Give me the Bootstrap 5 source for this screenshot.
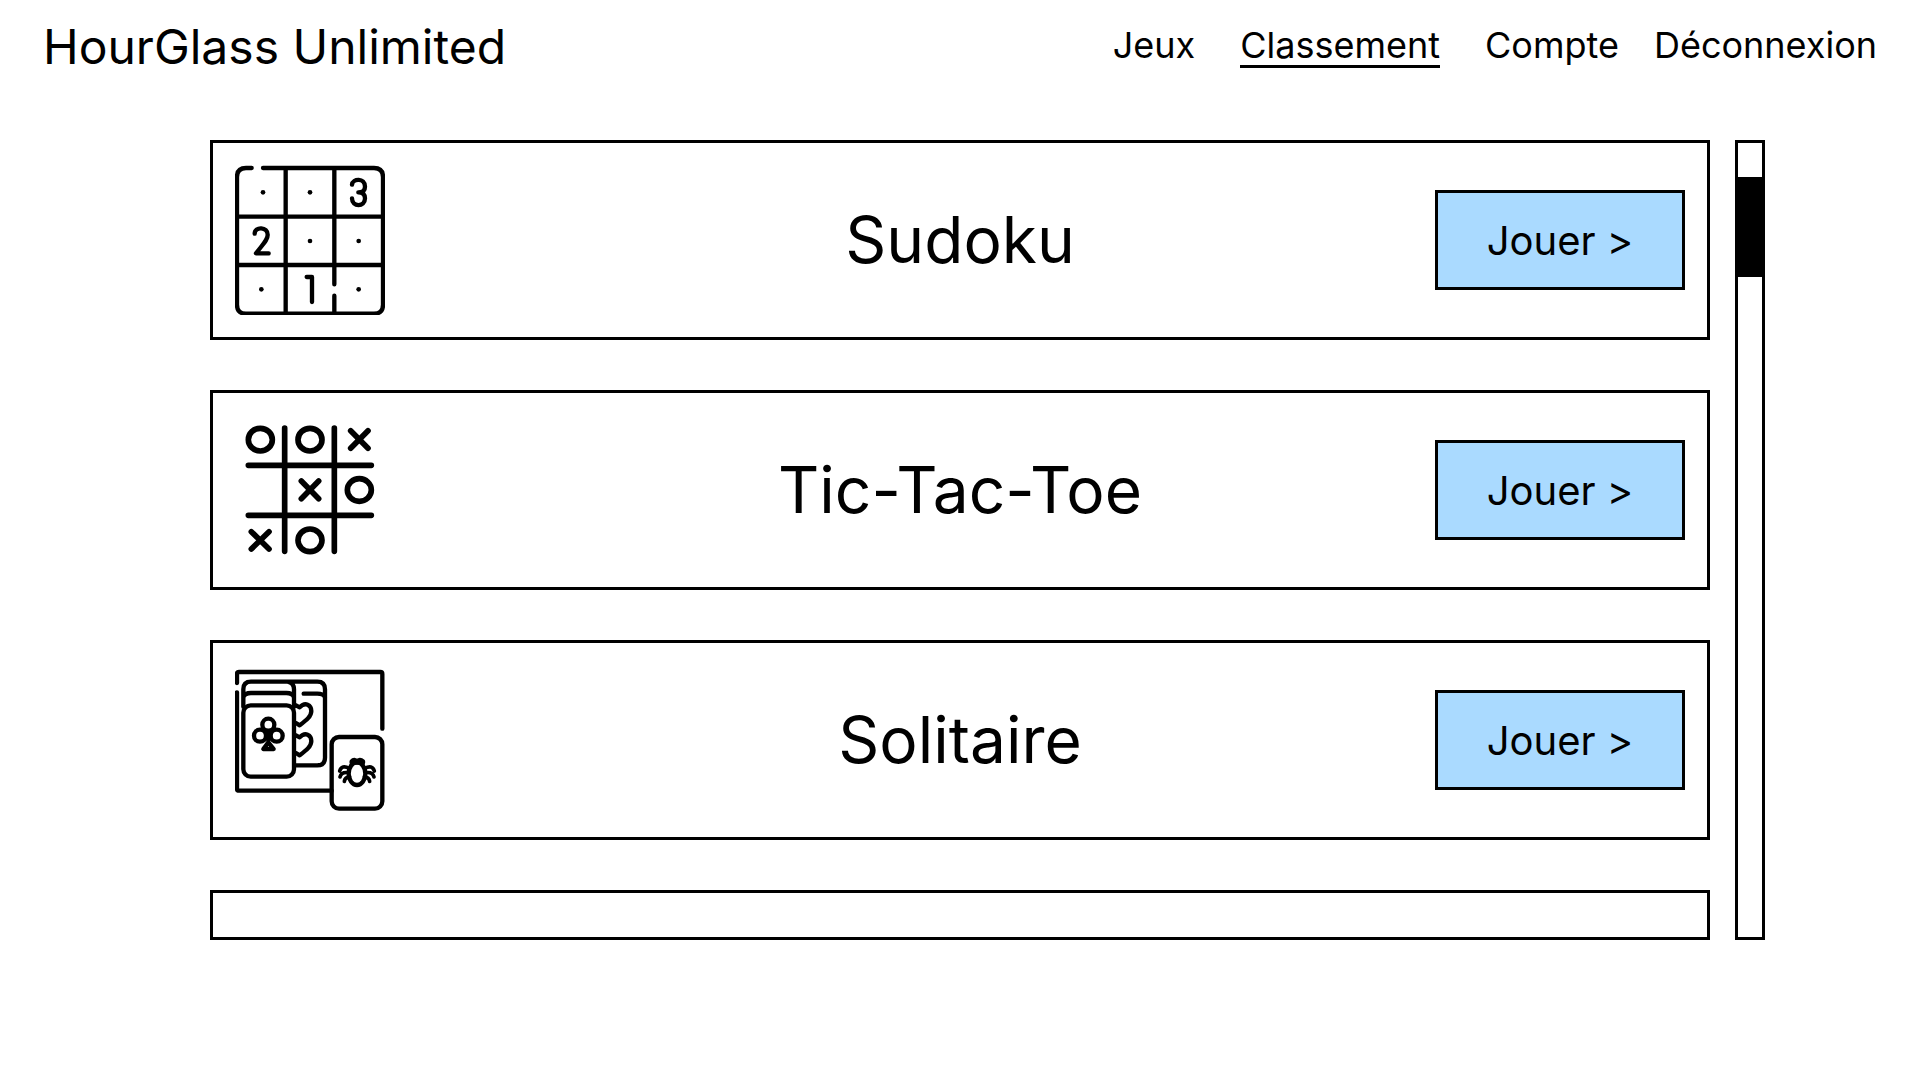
<!DOCTYPE html>
<html lang="fr">
<head>
<meta charset="utf-8">
<meta name="viewport" content="width=device-width, initial-scale=1">
<title>HourGlass Unlimited</title>
<link href="https://cdn.jsdelivr.net/npm/bootstrap@5.3.0/dist/css/bootstrap.min.css" rel="stylesheet">
<style>
body { font-family: Inter, "Liberation Sans", sans-serif; color: #000; background: #fff; }
.site-bar { padding: 12px 43px; }
.site-bar .navbar-brand { font-size: 48px; line-height: 70px; color: #000; padding: 0; margin: 0; }
.site-links { font-size: 36px; gap: 45px; padding-bottom: 2px; }
.site-links a { color: #000; text-decoration: none; border-bottom: 3px solid transparent; line-height: 40px; }
.site-links a.active { border-color: #000; }
.site-links .sign-out { margin-left: -10px; }
.games-area { padding: 46px 155px 40px 210px; gap: 25px; }
.game-list { gap: 50px; }
.game-row { display: grid; grid-template-columns: 1fr auto 1fr; align-items: center; border: 3px solid #000; padding: 22px; min-height: 200px; }
.game-row-next { border: 3px solid #000; height: 50px; }
.game-icon { width: 150px; height: 150px; fill: none; stroke: #000; stroke-width: 13; stroke-linecap: round; stroke-linejoin: round; }
.game-icon .bold-line { stroke-width: 17; }
.game-icon .leg-line { stroke-width: 11; }
.game-name { font-size: 64px; line-height: 78px; font-weight: 400; margin: 0; }
.play-btn { width: 250px; height: 100px; border: 3px solid #000; border-radius: 0; background: #aadaff; color: #000; font-size: 40px; line-height: 48px; justify-self: end; padding: 2px 0 0; }
.play-btn:hover { background: #8fcbfa; border-color: #000; color: #000; }
.scroll-track { width: 30px; border: 3px solid #000; padding-top: 34px; }
.scroll-thumb { height: 100px; background: #000; }
</style>
</head>
<body>
<header class="site-bar navbar d-flex justify-content-between align-items-center">
  <a class="navbar-brand" href="#">HourGlass Unlimited</a>
  <nav class="site-links d-flex flex-wrap" aria-label="Navigation principale">
    <a href="#">Jeux</a>
    <a class="active" href="#" aria-current="page">Classement</a>
    <a href="#">Compte</a>
    <a class="sign-out" href="#">Déconnexion</a>
  </nav>
</header>
<main class="games-area d-flex">
  <div class="game-list d-flex flex-column flex-grow-1">
    <section class="game-row">
      <svg class="game-icon" viewBox="105 105 450 450" aria-hidden="true">
        <path d="M155 114H138Q111 114 111 141V524Q111 551 138 551H522Q549 551 549 524V141Q549 114 522 114H189M257 114V551M403 114V463M403 497V551M111 260H549M111 405H549"/>
        <path d="M456 164C458 145 495 143 495 170Q495 187 475 187Q495 187 495 205C495 232 456 232 456 205M164 311C164 288 204 290 203 315C203 330 190 341 168 370H206M320 441H336V516"/>
        <g fill="#000" stroke="none"><circle cx="189" cy="187" r="7"/><circle cx="330" cy="187" r="7"/><circle cx="330" cy="333" r="7"/><circle cx="476" cy="333" r="7"/><circle cx="184" cy="478" r="7"/><circle cx="476" cy="478" r="7"/></g>
      </svg>
      <h2 class="game-name">Sudoku</h2>
      <button class="btn play-btn" type="button">Jouer &gt;</button>
    </section>
    <section class="game-row">
      <svg class="game-icon" viewBox="105 105 450 450" aria-hidden="true">
        <g class="bold-line">
          <path d="M254 144V514M403 144V514M145 256H514M145 406H514"/>
          <path d="M452 152L504 205M504 152L452 205M304 303L356 356M356 303L304 356M154 455L207 507M207 455L154 507"/>
          <ellipse cx="181" cy="179" rx="36" ry="34"/><ellipse cx="330" cy="179" rx="36" ry="34"/><ellipse cx="478" cy="330" rx="36" ry="34"/><ellipse cx="330" cy="481" rx="36" ry="34"/>
        </g>
      </svg>
      <h2 class="game-name">Tic-Tac-Toe</h2>
      <button class="btn play-btn" type="button">Jouer &gt;</button>
    </section>
    <section class="game-row">
      <svg class="game-icon" viewBox="105 105 450 450" aria-hidden="true">
        <path d="M111 159V132Q111 126 117 126H541Q547 126 547 132V296M111 187V476Q111 482 117 482H395"/>
        <rect x="395" y="321" width="152" height="215" rx="22"/>
        <path d="M130 230V178Q130 155 153 155H352Q375 155 375 178V383Q375 406 352 406H284M130 202Q134 189 153 189H259Q278 189 282 202M282 230V178Q282 159 263 155M311 191H352Q370 191 375 202"/>
        <rect x="130" y="226" width="152" height="214" rx="22"/>
        <path d="M288 226L299 232C316 214 334 225 334 243C334 259 320 270 299 286L288 279M288 316L299 322C316 304 334 315 334 333C334 349 320 360 299 376L288 369"/>
        <circle cx="205" cy="284" r="18"/><circle cx="180" cy="317" r="18"/><circle cx="230" cy="317" r="18"/>
        <path d="M205 305V332M205 337L190 357H221Z"/>
        <ellipse cx="471" cy="431" rx="25" ry="34"/>
        <path d="M455 398V394Q463 385 471 395Q479 385 489 394V398Z"/>
        <path class="leg-line" d="M448 415Q425 403 419 423M445 428Q424 425 420 441M449 440Q435 442 433 454M494 415Q517 403 523 423M497 428Q518 425 522 441M493 440Q507 442 509 454"/>
      </svg>
      <h2 class="game-name">Solitaire</h2>
      <button class="btn play-btn" type="button">Jouer &gt;</button>
    </section>
    <section class="game-row-next" aria-label="Jeu suivant"></section>
  </div>
  <div class="scroll-track flex-shrink-0"><div class="scroll-thumb"></div></div>
</main>
<script src="https://cdn.jsdelivr.net/npm/bootstrap@5.3.0/dist/js/bootstrap.bundle.min.js"></script>
</body>
</html>
